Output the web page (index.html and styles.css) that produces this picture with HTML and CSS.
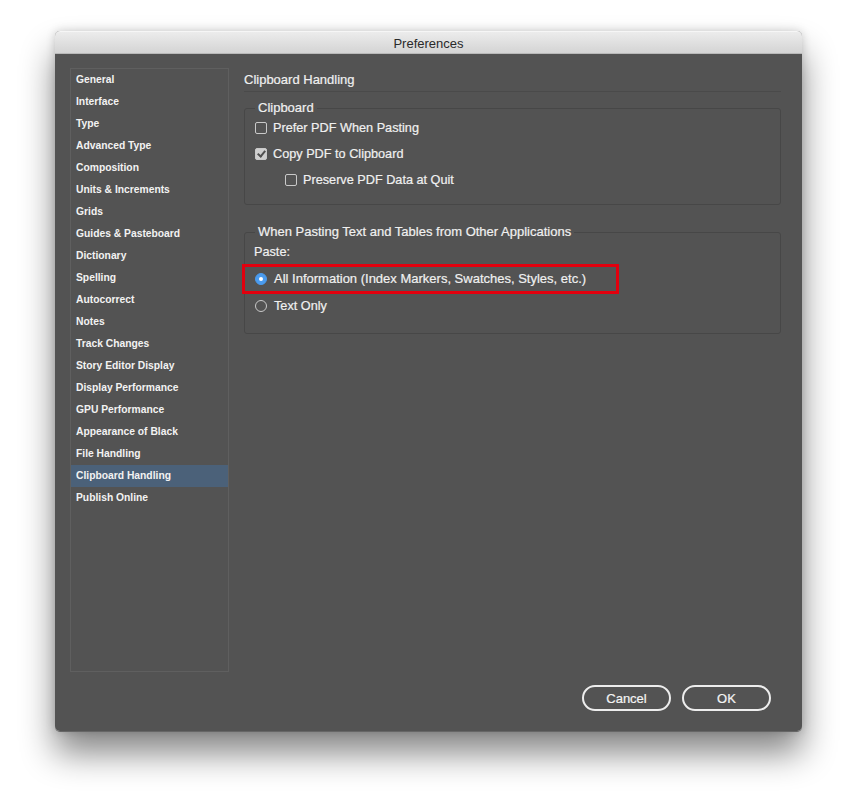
FILE: index.html
```html
<!DOCTYPE html>
<html lang="en">
<head>
    <meta charset="UTF-8">
    <meta name="viewport" content="width=device-width, initial-scale=1.0">
    <title>Preferences</title>
    <link rel="stylesheet" href="styles.css">
</head>
<body>
    <div class="window">
        <div class="titlebar">Preferences</div>
        <div class="content">
            <div class="main">
                <ul class="nav">
                    <li>General</li>
                    <li>Interface</li>
                    <li>Type</li>
                    <li>Advanced Type</li>
                    <li>Composition</li>
                    <li>Units &amp; Increments</li>
                    <li>Grids</li>
                    <li>Guides &amp; Pasteboard</li>
                    <li>Dictionary</li>
                    <li>Spelling</li>
                    <li>Autocorrect</li>
                    <li>Notes</li>
                    <li>Track Changes</li>
                    <li>Story Editor Display</li>
                    <li>Display Performance</li>
                    <li>GPU Performance</li>
                    <li>Appearance of Black</li>
                    <li>File Handling</li>
                    <li class="active">Clipboard Handling</li>
                    <li>Publish Online</li>
                </ul>

                <div class="pane">
                    <h2 class="pane-title">Clipboard Handling</h2>

                    <fieldset class="group group-clipboard">
                        <legend>Clipboard</legend>
                        <label class="option"><span class="check"></span>Prefer PDF When Pasting</label>
                        <label class="option"><span class="check checked"></span>Copy PDF to Clipboard</label>
                        <label class="option sub"><span class="check"></span>Preserve PDF Data at Quit</label>
                    </fieldset>

                    <fieldset class="group group-paste">
                        <legend>When Pasting Text and Tables from Other Applications</legend>
                        <div class="field-label">Paste:</div>
                        <label class="option radio-row highlighted"><span class="radio selected"></span>All Information (Index Markers, Swatches, Styles, etc.)</label>
                        <label class="option radio-row"><span class="radio"></span>Text Only</label>
                    </fieldset>
                </div>
            </div>

            <div class="actions">
                <button class="btn">Cancel</button>
                <button class="btn">OK</button>
            </div>
        </div>
    </div>
</body>
</html>
```

FILE: styles.css
```css
html {
    background: #fff;
}

body {
    margin: 0;
    padding: 31px 0 0 55px;
    min-height: 811px;
    box-sizing: border-box;
    font-family: "Liberation Sans", Arial, sans-serif;
    color: #f0f0f0;
}

.window {
    width: 747px;
    height: 700px;
    background: #535353;
    border-radius: 5px;
    box-shadow: 0 22px 34px rgba(0, 0, 0, 0.48), 0 0 10px rgba(0, 0, 0, 0.18);
    display: flex;
    flex-direction: column;
}

.titlebar {
    height: 23px;
    line-height: 23px;
    text-align: center;
    font-size: 13px;
    color: #2a2a2a;
    background: linear-gradient(#ececec, #d4d4d4);
    border-radius: 5px 5px 0 0;
    border-top: 1px solid #f6f6f6;
    border-bottom: 1px solid #b9b9b9;
    box-sizing: border-box;
}

.content {
    flex: 1;
    padding: 14px 21px 20px 15px;
    display: flex;
    flex-direction: column;
    border-radius: 0 0 5px 5px;
    border-bottom: 1px solid #666;
}

.main {
    display: grid;
    grid-template-columns: 159px 1fr;
    gap: 15px;
    height: 604px;
}

.nav {
    list-style: none;
    margin: 0;
    padding: 0;
    border: 1px solid #5f5f5f;
}

.nav li {
    height: 22px;
    line-height: 22px;
    padding-left: 5px;
    font-size: 10.3px;
    font-weight: bold;
    color: #f2f2f2;
}

.nav li.active {
    background: #4b6179;
}

.pane-title {
    margin: 0;
    padding-top: 2px;
    height: 21px;
    line-height: 20px;
    font-size: 13px;
    font-weight: normal;
    border-bottom: 1px solid #4a4a4a;
    -webkit-text-stroke: 0.2px #f0f0f0;
}

.group {
    margin: 9px 0 0;
    padding: 0 10px 11px 10px;
    border: 1px solid #474747;
    border-radius: 3px;
}

.group legend {
    padding: 0 3px;
    line-height: 14px;
    font-size: 13px;
    -webkit-text-stroke: 0.2px #f0f0f0;
}

.group-paste {
    margin-top: 20px;
    padding-bottom: 14px;
}

.option {
    display: flex;
    align-items: center;
    height: 26px;
    font-size: 12.7px;
    -webkit-text-stroke: 0.2px #f0f0f0;
}

.option.sub {
    margin-left: 30px;
}

.check {
    width: 12px;
    height: 12px;
    box-sizing: border-box;
    border: 1px solid #c9c9c9;
    border-radius: 2px;
    margin-right: 6px;
    display: flex;
    align-items: center;
    justify-content: center;
}

.check.checked {
    background: #cfcfcf;
}

.check.checked::after {
    content: "";
    width: 3px;
    height: 6px;
    border: solid #505050;
    border-width: 0 2px 2px 0;
    transform: translateY(-1px) rotate(40deg);
}

.field-label {
    height: 26px;
    line-height: 26px;
    font-size: 12.7px;
    margin-left: -1px;
    -webkit-text-stroke: 0.2px #f0f0f0;
}

.radio-row {
    height: 27px;
    width: max-content;
}

.radio-row.highlighted {
    font-size: 13px;
}

.radio {
    width: 12px;
    height: 12px;
    box-sizing: border-box;
    border: 1px solid #c9c9c9;
    border-radius: 50%;
    margin-right: 7px;
    display: flex;
    align-items: center;
    justify-content: center;
}

.radio.selected {
    background: #4a9bee;
    border-color: #4a9bee;
}

.radio.selected::after {
    content: "";
    width: 4px;
    height: 4px;
    border-radius: 50%;
    background: #fff;
}

.highlighted {
    position: relative;
}

/* red annotation frame drawn over the option */
.highlighted::after {
    content: "";
    position: absolute;
    left: -13px;
    top: -1px;
    width: 377px;
    height: 30px;
    box-sizing: border-box;
    border: 3px solid #e2000e;
}

.actions {
    margin-top: 13px;
    padding-right: 10px;
    display: flex;
    justify-content: flex-end;
    gap: 11px;
}

.btn {
    width: 89px;
    height: 26px;
    background: transparent;
    border: 2px solid #ededed;
    border-radius: 13px;
    color: #f4f4f4;
    font-family: inherit;
    font-size: 13px;
    -webkit-text-stroke: 0.2px #f4f4f4;
    cursor: pointer;
}
```
